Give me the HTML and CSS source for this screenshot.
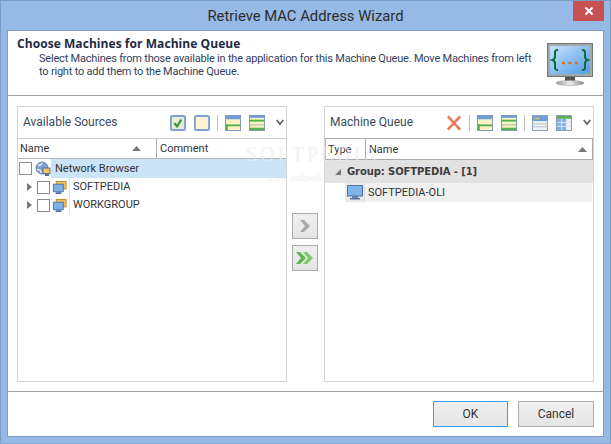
FILE: index.html
```html
<!DOCTYPE html>
<html lang="en">
<head>
<meta charset="utf-8">
<title>Retrieve MAC Address Wizard</title>
<link rel="stylesheet" href="styles.css">
</head>
<body>
<div class="window">
  <div class="titlebar">
    <span class="title">Retrieve MAC Address Wizard</span>
    <div class="close"><svg width="10" height="10" viewBox="0 0 10 10"><path d="M1.500 1.500l7 7M8.500 1.500l-7 7" stroke="#fff" stroke-width="2"/></svg></div>
  </div>
  <div class="client">
    <header class="head">
      <div class="head-text">
        <h1>Choose Machines for Machine Queue</h1>
        <p>Select Machines from those available in the application for this Machine Queue. Move Machines from left<br>to right to add them to the Machine Queue.</p>
      </div>
      <svg class="monitor" width="46" height="43" viewBox="0 0 46 43">
        <defs><linearGradient id="scr" x1="0" y1="0" x2="1" y2="1"><stop offset="0" stop-color="#c9e3fa"/><stop offset="1" stop-color="#4f9ae6"/></linearGradient>
        <linearGradient id="base" x1="0" y1="0" x2="1" y2="0"><stop offset="0" stop-color="#999"/><stop offset=".5" stop-color="#eee"/><stop offset="1" stop-color="#888"/></linearGradient></defs>
        <rect x=".5" y=".5" width="45" height="33" fill="#a2a9ad" stroke="#6f787d"/>
        <rect x="3" y="3" width="40" height="28" fill="url(#scr)"/>
        <rect x="18" y="34" width="10" height="4" fill="#555"/>
        <ellipse cx="23" cy="40" rx="14" ry="2.600" fill="url(#base)" stroke="#999" stroke-width=".5"/>
        <path d="M11 7c-3 0-3 1-3 3v3.500c0 2-1 3-2.500 3.500 1.500.5 2.500 1.500 2.500 3.500V24c0 2 0 3 3 3M35 7c3 0 3 1 3 3v3.500c0 2 1 3 2.500 3.500-1.500.5-2.500 1.500-2.500 3.500V24c0 2 0 3-3 3" fill="none" stroke="#0c6a3c" stroke-width="2"/>
        <circle cx="16.500" cy="20" r="1.600" fill="#d9701c"/><circle cx="23" cy="20" r="1.600" fill="#d9701c"/><circle cx="29.500" cy="20" r="1.600" fill="#d9701c"/>
        <rect x="39" y="29.500" width="3" height="1" fill="#5fd07a"/>
      </svg>
    </header>
    <main class="body">
      <section class="panel">
        <div class="toolbar">
          <span class="caption">Available Sources</span>
          <div class="tools">
            <svg class="tool" viewBox="0 0 17 17"><rect x="1" y="1" width="15" height="15" rx="1.500" fill="#e6edd8" stroke="#7f9fd2" stroke-width="2"/><path d="M4.500 8.500l3 3.500 4.500-7" fill="none" stroke="#3c9a3c" stroke-width="2.400"/></svg>
            <svg class="tool" viewBox="0 0 17 17"><rect x="1" y="1" width="15" height="15" rx="1.500" fill="#fdf3d2" stroke="#7f9fd2" stroke-width="2"/></svg>
            <i class="sep"></i>
            <svg class="tool" viewBox="0 0 17 17"><rect x=".5" y=".5" width="16" height="16" fill="#fdf1c4" stroke="#7d94b8"/><rect x="1" y="1" width="15" height="3.500" fill="#6f9fd8"/><rect x="1" y="10" width="15" height="2" fill="#55b24c"/><rect x="1" y="10" width="2" height="6" fill="#55b24c"/></svg>
            <svg class="tool" viewBox="0 0 17 17"><rect x=".5" y=".5" width="16" height="16" fill="#fdf1c4" stroke="#7d94b8"/><rect x="1" y="1" width="15" height="2" fill="#6f9fd8"/><rect x="1" y="5" width="15" height="2" fill="#55b24c"/><rect x="1" y="9.500" width="15" height="2" fill="#c9d6a6"/><rect x="1" y="13.500" width="15" height="2.500" fill="#55b24c"/></svg>
            <svg class="chev" width="8" height="7" viewBox="0 0 8 7"><path d="M.7 1l3.300 4 3.300-4" fill="none" stroke="#666" stroke-width="1.800"/></svg>
          </div>
        </div>
        <div class="cols">
          <div class="col col-name">Name<svg class="sort" width="9" height="5" viewBox="0 0 9 5"><path d="M4.500 0L9 5H0z" fill="#777"/></svg></div>
          <div class="col col-comment">Comment</div>
        </div>
        <div class="row row-root">
          <span class="check root-check"></span>
          <svg class="icon" width="16" height="16" viewBox="0 0 16 16"><circle cx="7" cy="7" r="6" fill="#7aa7d8" stroke="#6b7f99"/><path d="M3 4c2 1 3 0 4-2M2 9c2-1 4 0 4 3" fill="none" stroke="#e8eef4" stroke-width="1.400"/><rect x="8" y="7" width="7" height="5.500" fill="#f3c562" stroke="#59708f"/><rect x="10" y="13" width="4" height="2" fill="#59708f"/></svg>
          <span class="select">Network Browser</span>
        </div>
        <div class="row">
          <svg class="arrow" width="5" height="8" viewBox="0 0 5 8"><path d="M0 0l5 4-5 4z" fill="#777"/></svg>
          <span class="check"></span>
          <svg class="icon" width="15" height="15" viewBox="0 0 16 16"><rect x="4.500" y="1.500" width="10.500" height="8" fill="#f2bd5a" stroke="#b98a2c"/><rect x="1.500" y="4.500" width="10.500" height="8" fill="#7fb2e6" stroke="#4d74a8"/><rect x="4" y="13" width="6" height="2" fill="#4d74a8"/></svg>
          <span class="tree-label">SOFTPEDIA</span>
        </div>
        <div class="row">
          <svg class="arrow" width="5" height="8" viewBox="0 0 5 8"><path d="M0 0l5 4-5 4z" fill="#777"/></svg>
          <span class="check"></span>
          <svg class="icon" width="15" height="15" viewBox="0 0 16 16"><rect x="4.500" y="1.500" width="10.500" height="8" fill="#f2bd5a" stroke="#b98a2c"/><rect x="1.500" y="4.500" width="10.500" height="8" fill="#7fb2e6" stroke="#4d74a8"/><rect x="4" y="13" width="6" height="2" fill="#4d74a8"/></svg>
          <span class="tree-label">WORKGROUP</span>
        </div>
      </section>

      <div class="movers">
        <button class="move"><svg width="12" height="14" viewBox="0 0 12 14"><path d="M1 1h4l6 6-6 6H1l5-6z" fill="#a9a9a9"/></svg></button>
        <button class="move"><svg width="18" height="14" viewBox="0 0 18 14"><path d="M0 1h4l6 6-6 6H0l5-6z" fill="#5fb84f"/><path d="M7 1h4l6 6-6 6H7l5-6z" fill="#7cc96b"/></svg></button>
      </div>

      <section class="panel">
        <div class="toolbar">
          <span class="caption">Machine Queue</span>
          <div class="tools">
            <svg class="tool" viewBox="0 0 17 17"><path d="M2 1.500l13 14M15 1.500l-13 14" stroke="#e87a5d" stroke-width="2.800"/></svg>
            <i class="sep"></i>
            <svg class="tool" viewBox="0 0 17 17"><rect x=".5" y=".5" width="16" height="16" fill="#fdf1c4" stroke="#7d94b8"/><rect x="1" y="1" width="15" height="3.500" fill="#6f9fd8"/><rect x="1" y="10" width="15" height="2" fill="#55b24c"/><rect x="1" y="10" width="2" height="6" fill="#55b24c"/></svg>
            <svg class="tool" viewBox="0 0 17 17"><rect x=".5" y=".5" width="16" height="16" fill="#fdf1c4" stroke="#7d94b8"/><rect x="1" y="1" width="15" height="2" fill="#6f9fd8"/><rect x="1" y="5" width="15" height="2" fill="#55b24c"/><rect x="1" y="9.500" width="15" height="2" fill="#c9d6a6"/><rect x="1" y="13.500" width="15" height="2.500" fill="#55b24c"/></svg>
            <i class="sep"></i>
            <svg class="tool" viewBox="0 0 17 17"><rect x=".5" y=".5" width="16" height="16" fill="#eef1f5" stroke="#8a9ab5"/><rect x="1" y="1" width="15" height="5.500" fill="#6f9fd8"/><rect x="3" y="3" width="5" height="1.500" fill="#f2c25a"/><path d="M1 9.500h15M1 12.500h15" stroke="#b5bcc6"/></svg>
            <svg class="tool" viewBox="0 0 17 17"><rect x=".5" y=".5" width="16" height="16" fill="#eef1f5" stroke="#8a9ab5"/><rect x="1" y="4" width="10" height="12" fill="#86aee0"/><rect x="1" y="1" width="15" height="3" fill="#55b24c"/><path d="M6 4v12M11 4v12M1 8h15M1 12h15" stroke="#dbe6f2"/></svg>
            <svg class="chev" width="8" height="7" viewBox="0 0 8 7"><path d="M.7 1l3.300 4 3.300-4" fill="none" stroke="#666" stroke-width="1.800"/></svg>
          </div>
        </div>
        <div class="cols cols-q">
          <div class="col col-type">Type</div>
          <div class="col col-qname">Name<svg class="sort" width="9" height="5" viewBox="0 0 9 5"><path d="M4.500 0L9 5H0z" fill="#777"/></svg></div>
        </div>
        <div class="group">
          <svg class="group-arrow" width="6" height="6" viewBox="0 0 6 6"><path d="M6 0v6H0z" fill="#777"/></svg>
          <b>Group: SOFTPEDIA - [1]</b>
        </div>
        <div class="qrow">
          <div class="qtype"><svg width="16" height="15" viewBox="0 0 16 15"><rect x=".5" y=".5" width="15" height="10.500" fill="#7fb2e6" stroke="#4d74a8"/><rect x="5" y="11" width="6" height="2" fill="#6a7f99"/><rect x="3" y="13" width="10" height="1.500" fill="#4d74a8"/></svg></div>
          <span class="qname">SOFTPEDIA-OLI</span>
        </div>
      </section>
    </main>
    <footer class="foot">
      <button class="btn btn-default">OK</button>
      <button class="btn">Cancel</button>
    </footer>
  </div>
  <div class="wm wm-big">SOFTPEDIA</div>
  <div class="wm wm-small">www.softpedia.com</div>
</div>
</body>
</html>
```
FILE: styles.css
```css
* { box-sizing: border-box; }
html, body { margin: 0; padding: 0; }
body { width: 611px; height: 444px; overflow: hidden; font-family: Roboto, "Open Sans", sans-serif; font-size: 11px; color: #3a3a3a; }
.window { position: relative; width: 611px; height: 444px; background: #97b9e5; border: 1px solid #7a9bc4; border-bottom-color: #88a8d4; padding: 0 6px 6px; display: flex; flex-direction: column; }
.titlebar { height: 29px; flex: none; display: flex; align-items: center; justify-content: center; position: relative; }
.title { font-size: 14.800px; color: #2c2c2c; margin-top: 1px; }
.close { position: absolute; top: 0; right: 0; width: 31px; height: 20px; background: #c75050; display: flex; align-items: center; justify-content: center; }
.client { flex: 1; background: #fff; border: 1px solid #7f9cc4; display: flex; flex-direction: column; min-height: 0; }
.head { height: 65px; flex: none; border-bottom: 1px solid #a0a0a0; display: flex; justify-content: space-between; padding: 5px 10px 0 9px; }
.head-text { white-space: nowrap; }
.head h1 { margin: 0; font-family: "Open Sans", sans-serif; font-size: 12px; font-weight: 700; color: #1e2a44; line-height: 16px; letter-spacing: .06px; }
.head p { margin: 0 0 0 22px; font-size: 11px; line-height: 13px; color: #33415c; letter-spacing: -.2px; }
.monitor { margin-top: 7px; flex: none; }
.body { flex: 1; display: flex; padding: 10px 9px 9px 9px; min-height: 0; }
.panel { width: 270px; border: 1px solid #d4d4d4; display: flex; flex-direction: column; }
.toolbar { height: 31px; flex: none; display: flex; align-items: center; justify-content: space-between; padding: 0 2px 0 5px; }
.caption { font-size: 12px; color: #3a4a5e; margin-bottom: 2px; }
.tools { display: flex; align-items: center; gap: 8px; }
.tool { display: block; width: 16px; height: 16px; }
.sep { width: 1px; height: 16px; background: #c2c2c2; margin-left: -1px; margin-right: -1px; }
.chev { margin-left: 3px; }
.cols { height: 21px; flex: none; display: flex; border-top: 1px solid #cfcfcf; border-bottom: 1px solid #b5b5b5; }
.col { display: flex; align-items: center; justify-content: space-between; padding: 0 3px; font-size: 11px; color: #333; }
.col-name { width: 139px; border-right: 1px solid #aaa; padding-right: 15px; padding-left: 2px; }
.col-comment { flex: 1; }
.cols-q { height: 22px; border: 1px solid #aaa; border-left-color: #bbb; }
.col-type { width: 40px; border-right: 1px solid #aaa; padding-left: 2px; }
.col-qname { flex: 1; padding-right: 5px; }
.row { height: 18px; flex: none; display: flex; align-items: center; padding-left: 9px; font-size: 11px; color: #333; }
.row-root { height: 19px; padding-left: 1px; background: linear-gradient(#fff, #fff) left / 33px 100% no-repeat, #cce4f7; }
.arrow { flex: none; margin-right: 5px; }
.check { width: 13px; height: 13px; border: 1px solid #8c8c8c; background: #fff; flex: none; margin-right: 2px; }
.root-check { margin-right: 3px; }
.row .icon { flex: none; }
.select { margin-left: 4px; }
.tree-label { margin-left: 2px; border-left: 1px solid #e3e3e3; padding-left: 3px; line-height: 18px; }
.movers { flex: 1; display: flex; flex-direction: column; align-items: center; justify-content: center; gap: 6px; padding: 0 1px 4px 0; }
.move { width: 26px; height: 26px; padding: 0; background: linear-gradient(#f0f0f0, #e4e4e4); border: 1px solid #acacac; display: flex; align-items: center; justify-content: center; }
.group { height: 23px; flex: none; background: #e2e2e2; display: flex; align-items: center; padding-left: 10px; }
.group b { margin-left: 6px; color: #3c3c3c; font-family: "DejaVu Sans", sans-serif; font-size: 10px; letter-spacing: -.1px; }
.qrow { height: 19px; flex: none; background: #f0f0f0; display: flex; align-items: center; margin-left: 20px; margin-right: 1px; }
.qtype { width: 20px; height: 100%; background: #e9e9e9; display: flex; align-items: center; justify-content: center; border-right: 1px solid #dcdcdc; }
.qname { margin-left: 3px; font-size: 11px; color: #333; }
.foot { height: 45px; flex: none; border-top: 1px solid #a0a0a0; display: flex; justify-content: flex-end; gap: 10px; padding: 9px 9px 0 0; }
.btn { width: 76px; height: 26px; padding: 0; font: 12px Roboto, sans-serif; color: #333; background: linear-gradient(#f0f0f0, #e5e5e5); border: 1px solid #acacac; }
.btn-default { width: 75px; border-color: #3c9af0; }
.wm { position: absolute; pointer-events: none; font-family: "Liberation Serif", serif; color: rgba(255, 255, 255, .55); text-shadow: 0 0 1px rgba(150, 150, 150, .25); }
.wm-big { left: 245px; top: 142px; font-size: 20px; letter-spacing: 3px; }
.wm-small { left: 266px; top: 171px; font-size: 10px; }
```
